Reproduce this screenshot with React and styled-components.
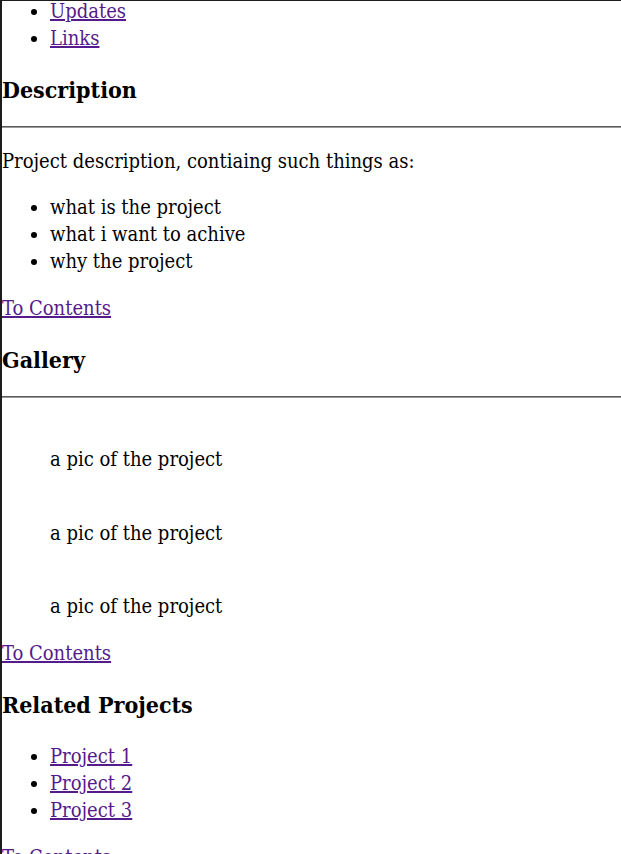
import React from 'react'
import styled, { createGlobalStyle } from 'styled-components'

const GlobalStyle = createGlobalStyle`
  html, body {
    margin: 0;
    padding: 0;
    background: #fff;
  }
  body {
    font-family: "DejaVu Serif Condensed", "DejaVu Serif", "Liberation Serif", serif;
    font-stretch: semi-condensed;
    font-size: 20px;
    line-height: 26.8px;
    color: #000;
  }
`

const Page = styled.main`
  min-height: 854px;
  border-left: 2px solid #1c1c1c;
  border-top: 1px solid #1c1c1c;
  overflow: hidden;
`

const Heading = styled.h3`
  font-size: 23px;
  line-height: 32px;
  font-weight: 700;
  margin: 22.5px 0 ${props => (props.$ruled ? '19.5px' : '22px')};
`

const Rule = styled.hr`
  margin: 10px 0;
  border: 0;
  border-top: 1px solid #5a5a5a;
  border-bottom: 1px solid #9a9a9a;
`

const List = styled.ul`
  margin: ${props => (props.$top ? '-3px' : '20px')} 0 20px;
  padding-left: 48px;
`

const Text = styled.p`
  margin: 20px 0;
`

const Link = styled.a`
  color: #551a8b;
  text-decoration: underline;
`

const Figure = styled.figure`
  margin: 20px 48px;
  &:first-of-type {
    margin-top: 22px;
  }
`

const Pic = styled.span`
  display: block;
  height: 26.7px;
`

const Section = ({ title, children, rule = true }) => (
  <section>
    <Heading $ruled={rule}>{title}</Heading>
    {rule && <Rule />}
    {children}
  </section>
)

const ToContents = () => <Link href="#contents">To Contents</Link>

const App = () => (
  <>
    <GlobalStyle />
    <Page>
      <List $top>
        <li><Link href="#updates">Updates</Link></li>
        <li><Link href="#links">Links</Link></li>
      </List>
      <Section title="Description">
        <Text>Project description, contiaing such things as:</Text>
        <List>
          <li>what is the project</li>
          <li>what i want to achive</li>
          <li>why the project</li>
        </List>
        <ToContents />
      </Section>
      <Section title="Gallery">
        {[1, 2, 3].map(n => (
          <Figure key={n}>
            <Pic />
            <figcaption>a pic of the project</figcaption>
          </Figure>
        ))}
        <ToContents />
      </Section>
      <Section title="Related Projects" rule={false}>
        <List>
          <li><Link href="#p1">Project 1</Link></li>
          <li><Link href="#p2">Project 2</Link></li>
          <li><Link href="#p3">Project 3</Link></li>
        </List>
        <ToContents />
      </Section>
    </Page>
  </>
)

export default App
